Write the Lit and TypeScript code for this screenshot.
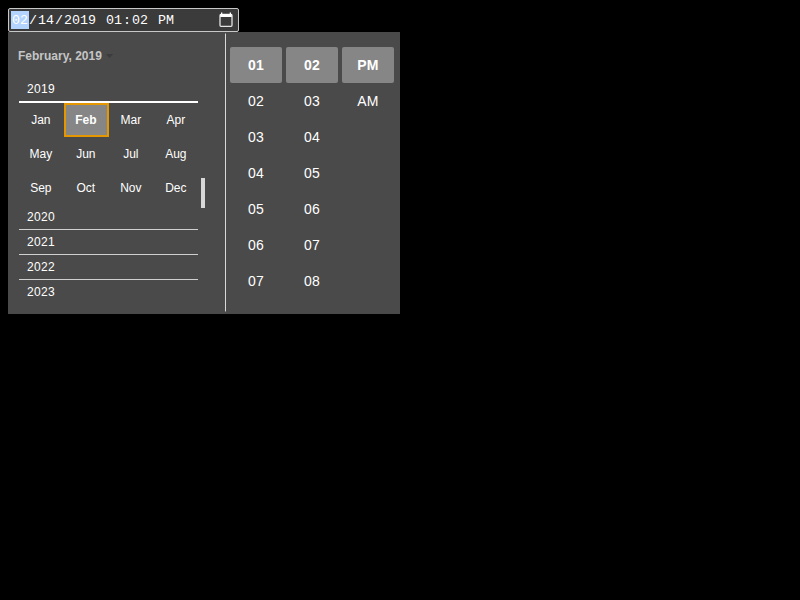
import { LitElement, html, css } from "lit";
import { customElement } from "lit/decorators.js";
import { classMap } from "lit/directives/class-map.js";

const MONTHS = ["Jan", "Feb", "Mar", "Apr", "May", "Jun", "Jul", "Aug", "Sep", "Oct", "Nov", "Dec"];
const YEARS = ["2020", "2021", "2022", "2023"];
const COLUMNS = [
  ["01", "02", "03", "04", "05", "06", "07"],
  ["02", "03", "04", "05", "06", "07", "08"],
  ["PM", "AM"],
];

@customElement("date-field")
class DateField extends LitElement {
  static styles = css`
    :host {
      box-sizing: border-box;
      display: flex;
      align-items: center;
      width: 231px;
      height: 24px;
      padding: 0 5px 0 2px;
      background: #3b3b3b;
      border: 1px solid #c8c8c8;
      border-radius: 2px;
      color: #fff;
      font: 13.333px/16px "Liberation Mono", monospace;
      white-space: pre;
    }
    span { padding-top: 2px; }
    .part { padding: 2px 1px 0; }
    .active { background: #b2d4ff; }
    .icon { width: 14px; height: 16px; margin-left: auto; }
  `;
  render() {
    const p = (t: string, active = false) =>
      html`<span class=${classMap({ part: true, active })}>${t}</span>`;
    return html`${p("02", true)}<span>/</span>${p("14")}<span>/</span>${p("2019")}<span> </span>${p("01")}<span>:</span>${p("02")}<span> </span>${p("PM")}
      <svg class="icon" viewBox="0 0 14 16">
        <rect x="1" y="2.5" width="12" height="11.8" rx="1" fill="none" stroke="#e4e4e4" stroke-width="1.3" />
        <path d="M2 .5h1.3V2H2zM10.7.5H12V2h-1.3zM1.2 2h11.6v3H1.2z" fill="#fff" />
      </svg>`;
  }
}

@customElement("month-pane")
class MonthPane extends LitElement {
  static styles = css`
    :host {
      box-sizing: border-box;
      display: block;
      width: 217px;
      padding: 14px 0 0 10px;
      font-size: 12px;
    }
    .title {
      display: flex;
      align-items: center;
      height: 20px;
      gap: 4.5px;
      font-weight: bold;
      color: #c5c5c5;
    }
    .arrow { width: 7px; height: 4px; }
    .body { display: flex; margin-top: 10px; }
    .list { width: 179px; margin-left: 1px; }
    .year {
      box-sizing: border-box;
      height: 25px;
      padding-left: 8px;
      line-height: 25px;
      letter-spacing: 0.33px;
      border-bottom: 1px solid #d0d0d0;
    }
    .year:last-child { border-bottom: none; }
    .open { height: 27px; border-bottom: 2px solid #fff; line-height: 26px; }
    .months { display: grid; grid-template-columns: repeat(4, 45px); grid-auto-rows: 34px; width: 180px; }
    .month {
      box-sizing: border-box;
      display: flex;
      align-items: center;
      justify-content: center;
      padding-right: 1.4px;
      border: 2px solid transparent;
    }
    .selected { background: #868686; border-color: #e59700; font-weight: bold; }
    .thumb { width: 4px; height: 30px; margin: 102px 0 0 3px; background: #d8d8d8; }
  `;
  render() {
    return html`
      <div class="title">February, 2019
        <svg class="arrow" viewBox="0 0 7 4"><path d="M0 0h7L3.5 4z" fill="#3c3c3c" /></svg>
      </div>
      <div class="body">
        <div class="list">
          <div class="year open">2019</div>
          <div class="months">
            ${MONTHS.map((m) => html`<div class=${classMap({ month: true, selected: m === "Feb" })}>${m}</div>`)}
          </div>
          ${YEARS.map((y) => html`<div class="year">${y}</div>`)}
        </div>
        <div class="thumb"></div>
      </div>`;
  }
}

@customElement("time-pane")
class TimePane extends LitElement {
  static styles = css`
    :host { display: flex; gap: 4px; padding: 15px 0 0 4px; font-size: 14px; }
    .column { width: 52px; }
    .cell { height: 36px; line-height: 36px; text-align: center; letter-spacing: 0.2px; }
    .cell:first-child { background: #868686; border-radius: 2px; font-weight: bold; }
  `;
  render() {
    return COLUMNS.map((c) => html`<div class="column">${c.map((t) => html`<div class="cell">${t}</div>`)}</div>`);
  }
}

@customElement("app-root")
class AppRoot extends LitElement {
  static styles = css`
    :host {
      box-sizing: border-box;
      display: block;
      height: 600px;
      padding: 8px;
      background: #000;
      color: #fff;
      font-family: "Liberation Sans", Arial, sans-serif;
    }
    .popup { display: flex; width: 392px; height: 282px; background: #4a4a4a; }
    .divider {
      width: 1px;
      height: 279px;
      margin-top: 1px;
      background: linear-gradient(#8a8a8a 1px, #d8d8d8 1px, #d8d8d8 278px, #8a8a8a 278px);
    }
  `;
  render() {
    return html`<date-field></date-field>
      <div class="popup">
        <month-pane></month-pane>
        <div class="divider"></div>
        <time-pane></time-pane>
      </div>`;
  }
}
